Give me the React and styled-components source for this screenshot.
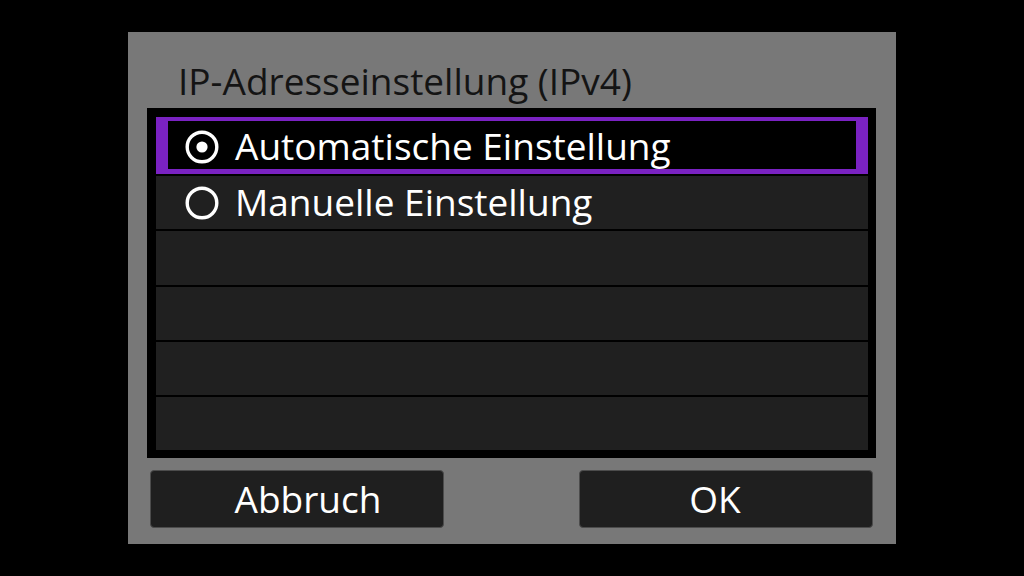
import React from 'react';
import styled, { createGlobalStyle } from 'styled-components';

const GlobalStyle = createGlobalStyle`
  html, body {
    margin: 0;
    padding: 0;
    background: #000;
  }
  body {
    font-family: 'Open Sans', 'Noto Sans', sans-serif;
    color: #fff;
  }
`;

const options = [
  { label: 'Automatische Einstellung', checked: true },
  { label: 'Manuelle Einstellung', checked: false },
  null,
  null,
  null,
  null,
];

// radio glyph, ring + optional dot
const Radio = ({ checked }) => (
  <svg width="34" height="34" viewBox="0 0 34 34">
    <circle cx="17" cy="17" r="14.8" fill="none" stroke="#fff" strokeWidth="3.4" />
    {checked && <circle cx="17" cy="17" r="5.6" fill="#fff" />}
  </svg>
);

const App = () => {
  return (
    <Page>
      <GlobalStyle />
      <Dialog>
        <Title>IP-Adresseinstellung (IPv4)</Title>
        <List>
          {options.map((opt, i) => (
            <Row key={i} selected={opt && opt.checked}>
              {opt && (
                <>
                  <Radio checked={opt.checked} />
                  <Label>{opt.label}</Label>
                </>
              )}
            </Row>
          ))}
        </List>
        <Footer>
          <Button shift={22}>Abbruch</Button>
          <Button shift={-22}>OK</Button>
        </Footer>
      </Dialog>
    </Page>
  );
};

const Page = styled.main`
  width: 1024px;
  height: 576px;
  display: flex;
  align-items: center;
  justify-content: center;
  background: #000;
`;

const Dialog = styled.section`
  width: 768px;
  height: 512px;
  box-sizing: border-box;
  background: #787878;
  padding: 0 20px 0 19px;
  display: flex;
  flex-direction: column;
`;

const Title = styled.h1`
  height: 76px;
  margin: 0;
  padding-left: 31px;
  padding-top: 20px;
  box-sizing: border-box;
  display: flex;
  align-items: center;
  font-size: 37px;
  font-weight: 400;
  color: #141414;
  letter-spacing: 0;
`;

const List = styled.div`
  height: 350px;
  box-sizing: border-box;
  background: #000;
  padding: 9px 8px 8px 9px;
  display: flex;
  flex-direction: column;
  gap: 2px;
`;

const Row = styled.div`
  flex: ${(p) => (p.selected ? '1.04 1 0' : '1 1 0')};
  min-height: 0;
  box-sizing: border-box;
  display: flex;
  align-items: center;
  gap: 16px;
  padding-left: 29px;
  padding-top: ${(p) => (p.selected ? '2px' : '0')};
  background: ${(p) => (p.selected ? '#000' : '#202020')};
  box-shadow: ${(p) =>
    p.selected
      ? 'inset 12px 0 0 #7a22c2, inset -12px 0 0 #7a22c2, inset 0 4px 0 #7a22c2, inset 0 -5px 0 #7a22c2'
      : 'none'};

  svg {
    flex-shrink: 0;
  }
`;

const Label = styled.span`
  font-size: 37px;
  line-height: 1;
  color: #fff;
  padding-bottom: 2px;
`;

const Footer = styled.div`
  flex: 1;
  display: flex;
  align-items: flex-start;
  justify-content: space-between;
  padding: 12px 3px 0 3px;
`;

const Button = styled.button`
  width: 294px;
  height: 58px;
  box-sizing: border-box;
  background: #1f1f1f;
  border: 1px solid #4c4c4c;
  border-radius: 4px;
  color: #fff;
  font-family: inherit;
  font-size: 37px;
  line-height: 1;
  padding: 0 ${(p) => (p.shift < 0 ? -p.shift : 0)}px 2px
    ${(p) => (p.shift > 0 ? p.shift : 0)}px;
`;

export default App;
